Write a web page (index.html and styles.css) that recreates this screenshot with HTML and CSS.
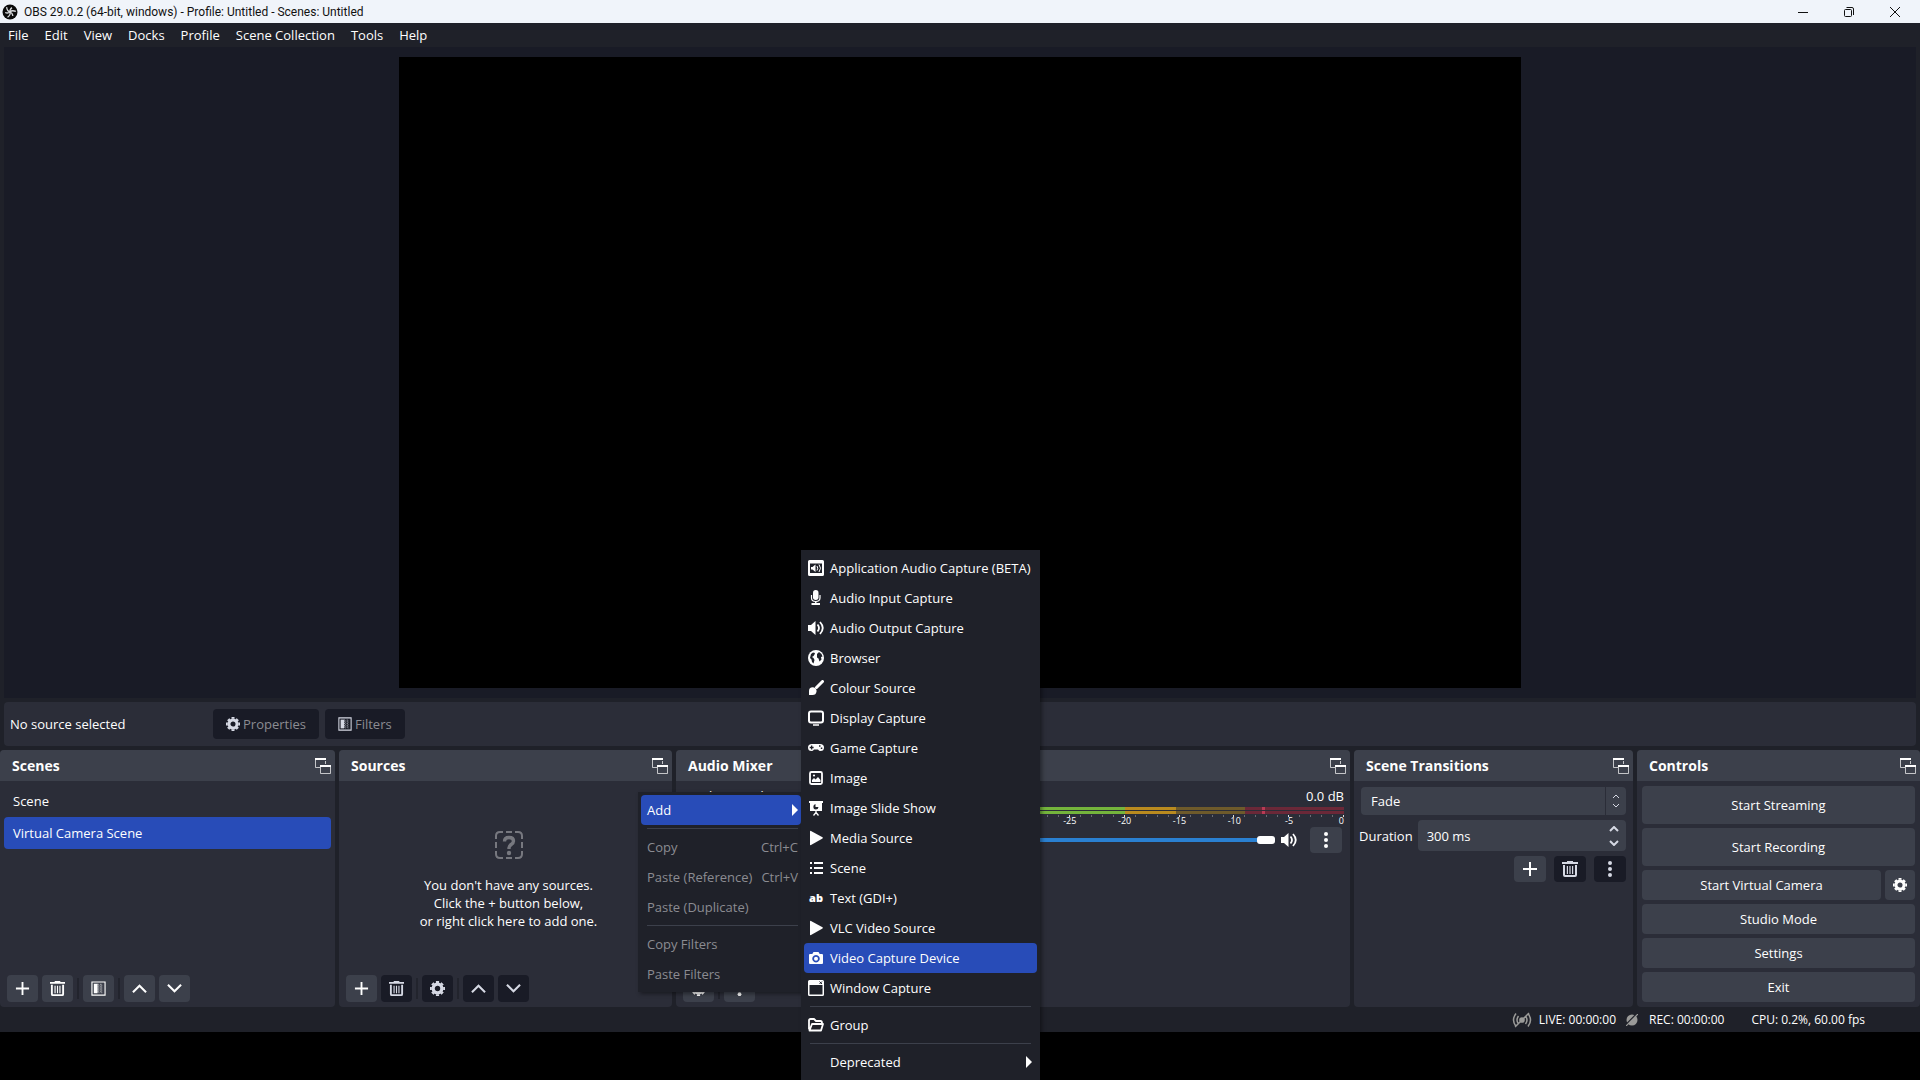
FILE: index.html
```html
<!DOCTYPE html>
<html lang="en">
<head>
  <meta charset="UTF-8" />
  <meta name="viewport" content="width=device-width, initial-scale=1.0"/>
  <title>OBS 29.0.2 (64-bit, windows) - Profile: Untitled - Scenes: Untitled</title>
  <link rel="stylesheet" href="styles.css">
</head>
<body>
  <!-- shared icons -->
  <svg class="sprite" aria-hidden="true">
    <symbol id="plus" viewBox="0 0 16 16"><path d="M8 1v14M1 8h14" fill="none" stroke="currentColor" stroke-width="2"/></symbol>
    <symbol id="trash" viewBox="0 0 16 16"><path d="M0 1h5V0h6v1h5v2H0zM1 4h2v10h10V4h2v10q0 2-2 2H3q-2 0-2-2zM4.800 5H6v8H4.800zM7.400 5h1.200v8H7.400zM10 5h1.200v8H10z" fill="currentColor"/></symbol>
    <symbol id="gear" viewBox="0 0 16 16"><path fill="none" stroke="currentColor" stroke-width="3.400" d="M8 3.400a4.600 4.600 0 1 0 0 9.200a4.600 4.600 0 1 0 0-9.200"/><path stroke="currentColor" stroke-width="3.400" d="M8 0v2M8 14v2M0 8h2M14 8h2M2.500 2.500l1.400 1.400M12.100 12.100l1.400 1.400M2.500 13.500l1.400-1.400M12.100 3.900l1.400-1.400"/></symbol>
    <symbol id="filter" viewBox="0 0 16 16"><path d="M1 1h14v14H1z" fill="none" stroke="currentColor" stroke-width="1.200"/><path d="M3 3h4v10H3z" fill="currentColor"/><path d="M7.500 3v10M10.500 3v10" stroke="currentColor" stroke-dasharray="1 1"/><path d="M8.500 4v9M11.500 4v9" stroke="currentColor" stroke-dasharray="1 1" opacity=".6"/></symbol>
    <symbol id="up" viewBox="0 0 16 16"><path d="M1 12l7-7 7 7" fill="none" stroke="currentColor" stroke-width="2.200"/></symbol>
    <symbol id="down" viewBox="0 0 16 16"><path d="M1 4l7 7 7-7" fill="none" stroke="currentColor" stroke-width="2.200"/></symbol>
    <symbol id="dots" viewBox="0 0 16 16"><g fill="currentColor"><circle cx="8" cy="2" r="2"/><circle cx="8" cy="8" r="2"/><circle cx="8" cy="14" r="2"/></g></symbol>
    <symbol id="popout" viewBox="0 0 16 16"><path d="M.5 1v8.500H5M10.500 3v3" fill="none" stroke="currentColor" opacity=".7"/><path d="M0 0h11v2H0zM5 7h11v2H5z" fill="currentColor"/><path d="M5.500 9v6.500h10V9" fill="none" stroke="currentColor" opacity=".7"/></symbol>
    <symbol id="speaker" viewBox="0 0 16 16"><path d="M0 5h3l4.500-4v14L3 11H0z" fill="currentColor"/><path d="M9.500 4.500q3 3.500 0 7M12 2q5.500 6 0 12" fill="none" stroke="currentColor" stroke-width="1.800"/></symbol>
    <symbol id="play" viewBox="0 0 16 16"><path d="M2 1.500q0-1 1-.5l11.500 6.200q.8.600 0 1.200L3 15q-1 .5-1-.5z" fill="currentColor"/></symbol>
    <symbol id="arrow" viewBox="0 0 6 12"><path d="M0 0l6 6-6 6z" fill="currentColor"/></symbol>
  </svg>

  <header class="titlebar">
    <svg class="logo" viewBox="0 0 16 16"><circle cx="8" cy="8" r="7.500" fill="#0b0b0b"/><g fill="none" stroke="#d8dadd" stroke-width="1.300"><path id="blade" d="M8 8Q5.200 7.500 4.600 3.200M8 8Q7.600 5.200 10 3.600"/><use href="#blade" transform="rotate(120 8 8)"/><use href="#blade" transform="rotate(240 8 8)"/></g></svg>
    <h1>OBS 29.0.2 (64-bit, windows) - Profile: Untitled - Scenes: Untitled</h1>
    <div class="window-buttons">
      <button aria-label="Minimize"><svg viewBox="0 0 10 10"><path d="M0 5.500h10"/></svg></button>
      <button aria-label="Restore"><svg viewBox="0 0 10 10"><rect x=".5" y="2.500" width="7" height="7" rx="1"/><path d="M2.500.5H8q1.500 0 1.500 1.500v6"/></svg></button>
      <button aria-label="Close"><svg viewBox="0 0 10 10"><path d="M0 0l10 10M10 0L0 10"/></svg></button>
    </div>
  </header>

  <nav class="menubar">
    <a href="#">File</a>
    <a href="#">Edit</a>
    <a href="#">View</a>
    <a href="#">Docks</a>
    <a href="#">Profile</a>
    <a href="#">Scene Collection</a>
    <a href="#">Tools</a>
    <a href="#">Help</a>
  </nav>

  <main class="workspace">
    <section class="preview"><div class="canvas"></div></section>

    <section class="source-bar">
      <span class="source-name">No source selected</span>
      <button class="btn" disabled><svg class="icon"><use href="#gear"/></svg>Properties</button>
      <button class="btn" disabled><svg class="icon"><use href="#filter"/></svg>Filters</button>
    </section>

    <div class="docks">
      <section class="dock">
        <header><h2>Scenes</h2><button aria-label="Undock"><svg class="icon"><use href="#popout"/></svg></button></header>
        <ul class="scene-list">
          <li>Scene</li>
          <li class="selected">Virtual Camera Scene</li>
        </ul>
        <div class="toolbar">
          <button class="btn" aria-label="Add scene"><svg class="icon"><use href="#plus"/></svg></button>
          <button class="btn" aria-label="Remove scene"><svg class="icon"><use href="#trash"/></svg></button>
          <i></i>
          <button class="btn" aria-label="Scene filters"><svg class="icon"><use href="#filter"/></svg></button>
          <i></i>
          <button class="btn" aria-label="Move up"><svg class="icon"><use href="#up"/></svg></button>
          <button class="btn" aria-label="Move down"><svg class="icon"><use href="#down"/></svg></button>
        </div>
      </section>

      <section class="dock">
        <header><h2>Sources</h2><button aria-label="Undock"><svg class="icon"><use href="#popout"/></svg></button></header>
        <div class="empty">
          <svg viewBox="0 0 28 28"><g fill="none" stroke="currentColor" stroke-width="2"><path d="M1 8V5q0-4 4-4h3M20 1h3q4 0 4 4v3M27 20v3q0 4-4 4h-3M8 27H5q-4 0-4-4v-3M11 1h6M11 27h6M1 11v6M27 11v6"/><path d="M9.500 10.500q0-4 4.500-4t4.500 3.500q0 2-2.300 3.500T14 17v1" stroke-width="3.400"/></g><circle cx="14" cy="22" r="2.200" fill="currentColor"/></svg>
          <p>You don't have any sources.<br>Click the + button below,<br>or right click here to add one.</p>
        </div>
        <div class="toolbar">
          <button class="btn" aria-label="Add source"><svg class="icon"><use href="#plus"/></svg></button>
          <button class="btn" disabled aria-label="Remove source"><svg class="icon"><use href="#trash"/></svg></button>
          <i></i>
          <button class="btn" disabled aria-label="Source properties"><svg class="icon"><use href="#gear"/></svg></button>
          <i></i>
          <button class="btn" disabled aria-label="Move up"><svg class="icon"><use href="#up"/></svg></button>
          <button class="btn" disabled aria-label="Move down"><svg class="icon"><use href="#down"/></svg></button>
        </div>
      </section>

      <section class="dock">
        <header><h2>Audio Mixer</h2><button aria-label="Undock"><svg class="icon"><use href="#popout"/></svg></button></header>
        <div class="mixer">
          <div class="channel-name"><label for="volume">Desktop Audio</label><span>0.0 dB</span></div>
          <div class="meter"></div>
          <div class="meter"></div>
          <div class="ticks"></div>
          <div class="scale">
            <span>-60</span><span>-55</span><span>-50</span><span>-45</span><span>-40</span><span>-35</span><span>-30</span><span>-25</span><span>-20</span><span>-15</span><span>-10</span><span>-5</span><span>0</span>
          </div>
          <div class="volume">
            <input type="range" id="volume" min="0" max="100" value="100">
            <button class="mute" aria-label="Mute"><svg class="icon"><use href="#speaker"/></svg></button>
            <button class="btn" aria-label="Channel options"><svg class="icon"><use href="#dots"/></svg></button>
          </div>
        </div>
        <div class="toolbar">
          <button class="btn" aria-label="Advanced audio"><svg class="icon"><use href="#gear"/></svg></button>
          <i></i>
          <button class="btn" aria-label="Mixer menu"><svg class="icon"><use href="#dots"/></svg></button>
        </div>
      </section>

      <section class="dock">
        <header><h2>Scene Transitions</h2><button aria-label="Undock"><svg class="icon"><use href="#popout"/></svg></button></header>
        <div class="transitions">
          <div class="combo">
            <select aria-label="Transition"><option>Fade</option><option>Cut</option></select>
            <span><svg viewBox="0 0 8 14"><path d="M1 4l3-3 3 3M1 10l3 3 3-3"/></svg></span>
          </div>
          <div class="duration">
            <label for="duration">Duration</label>
            <div class="spin">
              <input type="text" id="duration" value="300 ms">
              <svg viewBox="0 0 10 20"><path d="M1 5l4-4 4 4M1 15l4 4 4-4"/></svg>
            </div>
          </div>
          <div class="transition-buttons">
            <button class="btn" aria-label="Add transition"><svg class="icon"><use href="#plus"/></svg></button>
            <button class="btn" disabled aria-label="Remove transition"><svg class="icon"><use href="#trash"/></svg></button>
            <button class="btn" disabled aria-label="Transition options"><svg class="icon"><use href="#dots"/></svg></button>
          </div>
        </div>
      </section>

      <section class="dock">
        <header><h2>Controls</h2><button aria-label="Undock"><svg class="icon"><use href="#popout"/></svg></button></header>
        <div class="controls">
          <button class="btn tall">Start Streaming</button>
          <button class="btn tall">Start Recording</button>
          <div class="virtual-camera">
            <button class="btn">Start Virtual Camera</button>
            <button class="btn" aria-label="Virtual camera settings"><svg class="icon"><use href="#gear"/></svg></button>
          </div>
          <button class="btn">Studio Mode</button>
          <button class="btn">Settings</button>
          <button class="btn">Exit</button>
        </div>
      </section>
    </div>
  </main>

  <footer class="statusbar">
    <svg class="live-icon" viewBox="0 0 20 16"><g fill="none" stroke="currentColor" stroke-width="1.500"><path d="M4 1.500q-5 6.500 0 13M6.500 4q-3 4 0 8M16 1.500q5 6.500 0 13M13.500 4q3 4 0 8M3 15L17 1"/></g><circle cx="10" cy="8" r="2.800" fill="currentColor"/></svg>
    <span class="live">LIVE: 00:00:00</span>
    <svg class="rec-icon" viewBox="0 0 12 12"><circle cx="6" cy="6" r="5.500" fill="currentColor"/><path d="M0 10.500L10.500 0" stroke="#1f2129" stroke-width="1.500"/><path d="M0 12L12 0" stroke="currentColor" stroke-width="1.200"/></svg>
    <span class="rec">REC: 00:00:00</span>
    <span>CPU: 0.2%, 60.00 fps</span>
  </footer>

  <div class="desktop"></div>

  <ul class="menu context-menu">
    <li class="selected">Add<svg class="arrow"><use href="#arrow"/></svg></li>
    <li class="separator"></li>
    <li class="disabled">Copy<kbd>Ctrl+C</kbd></li>
    <li class="disabled">Paste (Reference)<kbd>Ctrl+V</kbd></li>
    <li class="disabled">Paste (Duplicate)</li>
    <li class="separator"></li>
    <li class="disabled">Copy Filters</li>
    <li class="disabled">Paste Filters</li>
  </ul>

  <ul class="menu add-menu">
    <li><svg class="icon" viewBox="0 0 16 16"><path fill-rule="evenodd" d="M1.500 0h13Q16 0 16 1.500v13q0 1.500-1.500 1.500h-13Q0 16 0 14.500v-13Q0 0 1.500 0zM2 3.500v9.500h12V3.500z" fill="currentColor"/><path d="M3 7h1.500L7.500 4.500v7.500L4.500 9.500H3z" fill="currentColor"/><path d="M9 6q1.500 2.200 0 4.500M11 4.500q3 3.700 0 7.500" fill="none" stroke="currentColor"/></svg>Application Audio Capture (BETA)</li>
    <li><svg class="icon" viewBox="0 0 16 16"><rect x="5" y="0" width="5.500" height="10" rx="2.700" fill="currentColor"/><path d="M3.500 5v3q0 3.500 4.200 3.500T12 8V5" fill="none" stroke="currentColor" stroke-width="1.200"/><path d="M7 11h1.500v2h3.500v2H3.500v-2H7z" fill="currentColor"/></svg>Audio Input Capture</li>
    <li><svg class="icon"><use href="#speaker"/></svg>Audio Output Capture</li>
    <li><svg class="icon" viewBox="0 0 16 16"><circle cx="8" cy="8" r="8" fill="currentColor"/><path d="M3 4l2-1.500 2 .5-.5 1.500L5.500 6 4 7l1.500 1 1 2-1 3.500L4 12 3.500 9.500 2 8zM9 4l2-2 2.500 2 1 2.500-1.500.5.500 2.500-2 2-1-3-1.500-1z" fill="#1f2129"/></svg>Browser</li>
    <li><svg class="icon" viewBox="0 0 16 16"><path d="M14.500 1.500L8.500 7.500" stroke="currentColor" stroke-width="3" stroke-linecap="round"/><path d="M1 15V10.500Q1.500 7 5 7.200Q9 8 8.500 11.500Q8 15 4.500 15z" fill="currentColor"/></svg>Colour Source</li>
    <li><svg class="icon" viewBox="0 0 16 16"><rect x="1" y="1.500" width="14" height="11" rx="2" fill="none" stroke="currentColor" stroke-width="2"/><path d="M5 15h6" stroke="currentColor" stroke-width="1.500"/></svg>Display Capture</li>
    <li><svg class="icon" viewBox="0 0 16 16"><path fill-rule="evenodd" d="M4 4h8q4 0 4 3.500T12.500 11q-1.500 0-2.500-1.500H6Q5 11 3.500 11Q0 11 0 7.500T4 4zM3 5.500v1.300H1.700v1.400H3v1.300h1.300V8.200h1.300V6.800H4.300V5.500zM11 5.300v1.500h1.500V5.300zM12.800 7.500V9h1.500V7.500z" fill="currentColor"/></svg>Game Capture</li>
    <li><svg class="icon" viewBox="0 0 16 16"><rect x="2" y="2" width="12" height="12" rx="1.500" fill="none" stroke="currentColor" stroke-width="1.800"/><path d="M4 12V10l2-2 1.500 1.500L10 7l2.500 3v2z" fill="currentColor"/><circle cx="6" cy="5.500" r="1.100" fill="currentColor"/></svg>Image</li>
    <li><svg class="icon" viewBox="0 0 16 16"><path d="M1 1h14v2h-1v8H2V3H1z" fill="currentColor"/><path d="M8 11v2M8 12.500l-2.500 3M8 12.500l2.500 3" stroke="currentColor" stroke-width="1.300"/><path d="M7.500 4v3h3q-.3 2.500-2.700 2.500T5.300 7q0-2.500 2.200-3z" fill="#1f2129"/></svg>Image Slide Show</li>
    <li><svg class="icon"><use href="#play"/></svg>Media Source</li>
    <li><svg class="icon" viewBox="0 0 16 16"><path d="M2 3h2M2 8h2M2 13h2M6 3h9M6 8h9M6 13h9" stroke="currentColor" stroke-width="2"/></svg>Scene</li>
    <li><span class="icon text-icon">ab</span>Text (GDI+)</li>
    <li><svg class="icon"><use href="#play"/></svg>VLC Video Source</li>
    <li class="selected"><svg class="icon" viewBox="0 0 16 16"><path fill-rule="evenodd" d="M5.500 2h5l1.200 2H14q1 0 1 1v8q0 1-1 1H2q-1 0-1-1V5q0-1 1-1h2.300zM8 5a3.700 3.700 0 1 0 .01 0z" fill="currentColor"/><circle cx="8" cy="8.700" r="2" fill="currentColor"/></svg>Video Capture Device</li>
    <li><svg class="icon" viewBox="0 0 16 16"><path fill-rule="evenodd" d="M1.500 0h13Q16 0 16 1.500v13q0 1.500-1.500 1.500h-13Q0 16 0 14.500v-13Q0 0 1.500 0zM1.500 5v9.500h13V5z" fill="currentColor"/><path d="M11.500 1.500l2.500 2.500M14 1.500L11.500 4" stroke="#1f2129"/></svg>Window Capture</li>
    <li class="separator"></li>
    <li><svg class="icon" viewBox="0 0 16 16"><path d="M1 12.500V3.500Q1 2 2.500 2H6l2 2h4.500Q14 4 14 6M1.500 13.500L4 7h11l-2 6.500z" fill="none" stroke="currentColor" stroke-width="1.800" stroke-linejoin="round"/></svg>Group</li>
    <li class="separator"></li>
    <li><span class="icon"></span>Deprecated<svg class="arrow"><use href="#arrow"/></svg></li>
  </ul>
</body>
</html>
```
FILE: styles.css
```css
* {
  box-sizing: border-box;
}

body {
  margin: 0;
  height: 100vh;
  display: flex;
  flex-direction: column;
  position: relative;
  background: #1f2129;
  color: #fefefe;
  font-family: "Open Sans", "Noto Sans", sans-serif;
  font-size: 13px;
  line-height: 18px;
}

button, input, select {
  font: inherit;
  color: inherit;
  border: none;
  padding: 0;
  background: none;
}

h1, h2, p, ul {
  margin: 0;
  padding: 0;
}

ul {
  list-style: none;
}

.sprite {
  position: absolute;
  width: 0;
  height: 0;
}

.icon {
  width: 16px;
  height: 16px;
  flex: none;
}

/* title bar and menu */
.titlebar {
  height: 23px;
  display: flex;
  align-items: center;
  gap: 6px;
  padding: 0 2px;
  background: #f0f4fa;
  color: #111;
}

.logo {
  width: 16px;
  height: 16px;
}

.titlebar h1 {
  flex: 1;
  font-family: Roboto, sans-serif;
  font-size: 12px;
  font-weight: normal;
}

.window-buttons {
  display: flex;
}

.window-buttons button {
  width: 46px;
  height: 20px;
  display: grid;
  place-items: center;
}

.window-buttons svg {
  width: 10px;
  height: 10px;
  fill: none;
  stroke: #111;
  overflow: visible;
}

.menubar {
  height: 24px;
  display: flex;
  align-items: center;
  gap: 16px;
  padding: 0 8px;
}

.menubar a {
  color: inherit;
  text-decoration: none;
}

/* preview */
.workspace {
  flex: 1;
  min-height: 0;
  display: flex;
  flex-direction: column;
  gap: 4px;
}

.preview {
  flex: 1;
  min-height: 0;
  display: flex;
  justify-content: center;
  margin: 0 4px;
  padding: 10px;
  background: #191b26;
}

.canvas {
  height: 100%;
  aspect-ratio: 16 / 9;
  background: #000;
}

.source-bar {
  display: flex;
  align-items: center;
  gap: 6px;
  margin: 0 4px;
  padding: 7px 6px;
  border-radius: 4px;
  background: #2b2d38;
}

.source-name {
  width: 197px;
}

.btn {
  height: 30px;
  display: flex;
  align-items: center;
  justify-content: center;
  border-radius: 4px;
  background: #3c404b;
}

.btn:disabled {
  background: #191b26;
  color: #d6d9e4;
}

.source-bar .btn {
  gap: 3px;
  padding: 0 13px;
  color: #8b8c92;
}

.source-bar .btn .icon {
  color: #d6d9e4;
  width: 14px;
  height: 14px;
}

/* docks */
.docks {
  display: grid;
  grid-template-columns: 335fr 333fr 674fr 279fr 283fr;
  gap: 4px;
}

.dock {
  min-width: 0;
  display: flex;
  flex-direction: column;
  border-radius: 4px;
  overflow: hidden;
  background: #2b2d38;
}

.dock header {
  height: 31px;
  flex: none;
  display: flex;
  align-items: center;
  justify-content: space-between;
  padding: 0 4px 0 12px;
  background: #3c404b;
}

.dock header button {
  display: flex;
}

.dock h2 {
  font-size: 14px;
}

.scene-list {
  flex: 1;
  padding: 4px;
}

.scene-list li {
  padding: 7px 9px;
  border-radius: 4px;
}

.selected {
  background: #284cb8;
}

.toolbar {
  display: flex;
  gap: 4px;
  padding: 0 7px 5px;
}

.toolbar .btn {
  width: 31px;
  height: 27px;
}

.toolbar .icon {
  width: 15px;
  height: 15px;
}

.toolbar i {
  width: 2px;
  margin: 3px 0;
  background: #22242d;
}

.empty {
  flex: 1;
  display: flex;
  flex-direction: column;
  align-items: center;
  padding: 50px 0 0 6px;
  gap: 17px;
  text-align: center;
}

.empty svg {
  width: 28px;
  height: 28px;
  color: #77787f;
}

/* mixer */
.mixer {
  flex: 1;
  padding: 6px 6px 0 10px;
}

.channel-name {
  display: flex;
  justify-content: space-between;
  margin-bottom: 2px;
}

.meter {
  height: 3px;
  margin-bottom: 1px;
  background: linear-gradient(to right, transparent 87.5%, #b93a55 87.5%, #b93a55 88%, transparent 88%),
    linear-gradient(to right, #74b43c 66.7%, #b98a1f 66.7%, #b98a1f 74.4%, #6e5a2b 74.4%, #6e5a2b 85%, #6b2838 85%);
}

.ticks {
  height: 2px;
  background: repeating-linear-gradient(to right, #ddd 0 1px, transparent 1px calc((100% - 1px) / 12)),
    repeating-linear-gradient(to right, #6a6c74 0 1px, transparent 1px calc((100% - 1px) / 60));
}

.scale {
  display: flex;
  justify-content: space-between;
  font-size: 9px;
  line-height: 8px;
}

.scale span {
  width: 0;
  display: flex;
  justify-content: center;
}

.scale span:last-child {
  justify-content: flex-end;
}

.volume {
  display: flex;
  align-items: center;
  padding: 2px 2px 0 0;
}

.volume input {
  flex: 1;
  margin: 0;
  appearance: none;
}

.volume input::-webkit-slider-runnable-track {
  height: 4px;
  border-radius: 2px;
  background: #2a80d1;
}

.volume input::-webkit-slider-thumb {
  appearance: none;
  width: 18px;
  height: 8px;
  margin-top: -2px;
  border-radius: 3px;
  background: #fefefe;
}

.volume .mute {
  display: flex;
  margin: 0 13px 0 6px;
}

.volume .btn {
  width: 32px;
  height: 26px;
}

/* transitions */
.transitions {
  display: flex;
  flex-direction: column;
  gap: 5px;
  padding: 6px 7px 0 5px;
}

.combo {
  display: flex;
  gap: 1px;
  margin-left: 2px;
  height: 28px;
}

.combo select {
  flex: 1;
  appearance: none;
  padding-left: 10px;
  border-radius: 4px 0 0 4px;
  background: #3c404b;
}

.combo span {
  width: 20px;
  display: grid;
  place-items: center;
  border-radius: 0 4px 4px 0;
  background: #3c404b;
}

.combo svg,
.spin svg {
  width: 8px;
  height: 14px;
  fill: none;
  stroke: #d6d9e4;
}

.duration {
  display: flex;
  align-items: center;
  gap: 5px;
}

.spin {
  flex: 1;
  min-width: 0;
  height: 31px;
  display: flex;
  align-items: center;
  padding: 0 7px 0 9px;
  border-radius: 4px;
  background: #3c404b;
}

.spin input {
  flex: 1;
  min-width: 0;
}

.spin svg {
  width: 10px;
  height: 20px;
  stroke-width: 2;
}

.transition-buttons {
  display: flex;
  justify-content: flex-end;
  gap: 8px;
}

.transition-buttons .btn {
  width: 32px;
  height: 26px;
}

/* controls */
.controls {
  display: flex;
  flex-direction: column;
  gap: 4px;
  padding: 5px;
}

.controls .tall {
  height: 38px;
}

.virtual-camera {
  display: grid;
  grid-template-columns: 1fr 30px;
  gap: 4px;
}

.virtual-camera .icon {
  width: 14px;
  height: 14px;
}

/* status bar */
.statusbar {
  height: 25px;
  display: flex;
  align-items: center;
  justify-content: flex-end;
  padding-right: 55px;
  font-size: 12px;
}

.statusbar svg {
  color: #9a9a98;
}

.live-icon {
  width: 20px;
  height: 16px;
}

.rec-icon {
  width: 12px;
  height: 12px;
}

.live {
  margin: 0 10px 0 7px;
}

.rec {
  margin: 0 27px 0 11px;
}

.desktop {
  height: 48px;
  background: #000;
}

/* popup menus */
.menu {
  position: absolute;
  padding: 3px;
  background: #1f2129;
  box-shadow: 2px 2px 4px rgba(0, 0, 0, 0.4);
}

.menu li {
  height: 30px;
  display: flex;
  align-items: center;
  gap: 6px;
  padding: 0 5px 0 4px;
  border-radius: 4px;
}

.menu .separator {
  height: 1px;
  margin: 3px 6px;
  background: #3c404b;
  border-radius: 0;
}

.menu .disabled {
  color: #8b8c92;
}

.menu kbd,
.menu .arrow {
  margin-left: auto;
  font: inherit;
}

.arrow {
  width: 6px;
  height: 12px;
}

.context-menu {
  left: 638px;
  top: 792px;
  width: 166px;
}

.context-menu li {
  padding: 0 3px 0 6px;
}

.context-menu .separator {
  margin-right: 3px;
}

.add-menu {
  left: 801px;
  bottom: 0;
  width: 239px;
}

.text-icon {
  font-size: 11px;
  line-height: 16px;
  font-weight: 900;
  text-align: center;
}
```
